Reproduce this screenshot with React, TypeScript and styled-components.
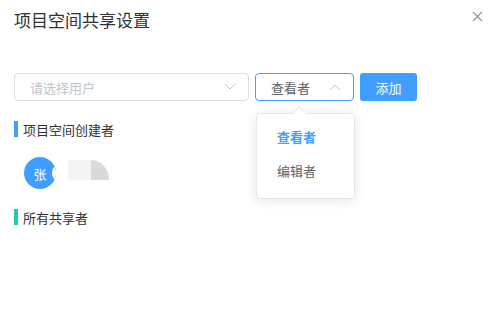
import styled, { createGlobalStyle } from 'styled-components'

const GlobalStyle = createGlobalStyle`
  html, body {
    margin: 0;
    padding: 0;
    background: #fff;
    font-family: "Noto Sans CJK SC", "Noto Sans", sans-serif;
  }
`

const Dialog = styled.div`
  position: relative;
  width: 503px;
  height: 317px;
  box-sizing: border-box;
  padding: 8px 14px 0;
  background: #fff;
`

const Header = styled.div`
  display: flex;
  justify-content: space-between;
  align-items: center;
  height: 24px;
`

const Title = styled.div`
  font-size: 17px;
  line-height: 24px;
  color: #303133;
`

const Close = styled.div`
  display: flex;
  margin-right: 6px;
  margin-top: -8px;
  color: #909399;
`

const Row = styled.div`
  display: flex;
  align-items: center;
  gap: 6px;
  margin-top: 41px;
  height: 28px;
`

const Select = styled.div<{ $w: number; $active?: boolean }>`
  position: relative;
  box-sizing: border-box;
  width: ${p => p.$w}px;
  height: 28px;
  display: flex;
  align-items: center;
  justify-content: space-between;
  padding: 0 12px 0 15px;
  border: 1px solid ${p => (p.$active ? '#409eff' : '#dcdfe6')};
  border-radius: 4px;
  font-size: 13px;
  color: #606266;
`

const Placeholder = styled.span`
  color: #c0c4cc;
`

const Button = styled.div`
  box-sizing: border-box;
  width: 57px;
  height: 28px;
  display: flex;
  align-items: center;
  justify-content: center;
  background: #409eff;
  border-radius: 3px;
  color: #fff;
  font-size: 13px;
`

const Menu = styled.div`
  position: absolute;
  top: 39px;
  left: 0;
  width: 99px;
  box-sizing: border-box;
  padding: 6px 0 10px;
  background: #fff;
  border: 1px solid #e4e7ed;
  border-radius: 4px;
  box-shadow: 0 2px 12px rgba(0, 0, 0, 0.1);
  z-index: 2;

  &::before {
    content: '';
    position: absolute;
    top: -6px;
    left: 37px;
    width: 10px;
    height: 10px;
    background: #fff;
    border-left: 1px solid #e4e7ed;
    border-top: 1px solid #e4e7ed;
    transform: rotate(45deg);
  }
`

const MenuItem = styled.div<{ $selected?: boolean }>`
  position: relative;
  height: 34px;
  line-height: 34px;
  padding-left: 20px;
  font-size: 13px;
  color: ${p => (p.$selected ? '#409eff' : '#606266')};
  font-weight: ${p => (p.$selected ? 700 : 400)};
`

const Heading = styled.div<{ $bar: string }>`
  display: flex;
  align-items: center;
  gap: 5px;
  height: 16px;
  margin-top: 20px;
  font-size: 13px;
  color: #303133;

  &::before {
    content: '';
    width: 4px;
    height: 16px;
    background: ${p => (p.$bar === 'green' ? '#1fcfa5' : '#409eff')};
  }
`

const Members = styled.div`
  display: flex;
  align-items: center;
  gap: 12px;
  margin-top: 20px;
  padding-left: 10px;
  height: 32px;
`

const Avatar = styled.div`
  position: relative;
  width: 32px;
  height: 32px;
  border-radius: 50%;
  background: #409eff;
  color: #fff;
  font-size: 13px;
  display: flex;
  align-items: center;
  justify-content: center;
  overflow: hidden;

  &::after {
    content: '';
    position: absolute;
    right: -6px;
    top: 9px;
    width: 10px;
    height: 14px;
    border-radius: 50%;
    background: #fff;
  }
`

const Broken = styled.div`
  display: flex;
  height: 20px;
  margin-top: -6px;
`

const Part = styled.div<{ $w: number; $c: string; $round?: boolean }>`
  width: ${p => p.$w}px;
  height: 20px;
  background: ${p => p.$c};
  border-top-right-radius: ${p => (p.$round ? '18px 20px' : '0')};
`

function Chevron({ up }: { up?: boolean }) {
  return (
    <svg width="12" height="8" viewBox="0 0 12 8" fill="none">
      <path
        d={up ? 'M1 7 L6 2 L11 7' : 'M1 1 L6 6 L11 1'}
        stroke="#c0c4cc"
        strokeWidth="1"
      />
    </svg>
  )
}

export default function App() {
  return (
    <>
      <GlobalStyle />
      <Dialog>
        <Header>
          <Title>项目空间共享设置</Title>
          <Close>
            <svg width="11" height="11" viewBox="0 0 11 11">
              <path d="M1 1 L10 10 M10 1 L1 10" stroke="#909399" strokeWidth="1.2" />
            </svg>
          </Close>
        </Header>
        <Row>
          <Select $w={235}>
            <Placeholder>请选择用户</Placeholder>
            <Chevron />
          </Select>
          <Select $w={99} $active>
            <span>查看者</span>
            <Chevron up />
            <Menu>
              <MenuItem $selected>查看者</MenuItem>
              <MenuItem>编辑者</MenuItem>
            </Menu>
          </Select>
          <Button>添加</Button>
        </Row>
        <Heading $bar="blue">项目空间创建者</Heading>
        <Members>
          <Avatar>张</Avatar>
          <Broken>
            <Part $w={23} $c="#f5f5f5" />
            <Part $w={18} $c="#d9d9d9" $round />
          </Broken>
        </Members>
        <Heading $bar="green">所有共享者</Heading>
      </Dialog>
    </>
  )
}
